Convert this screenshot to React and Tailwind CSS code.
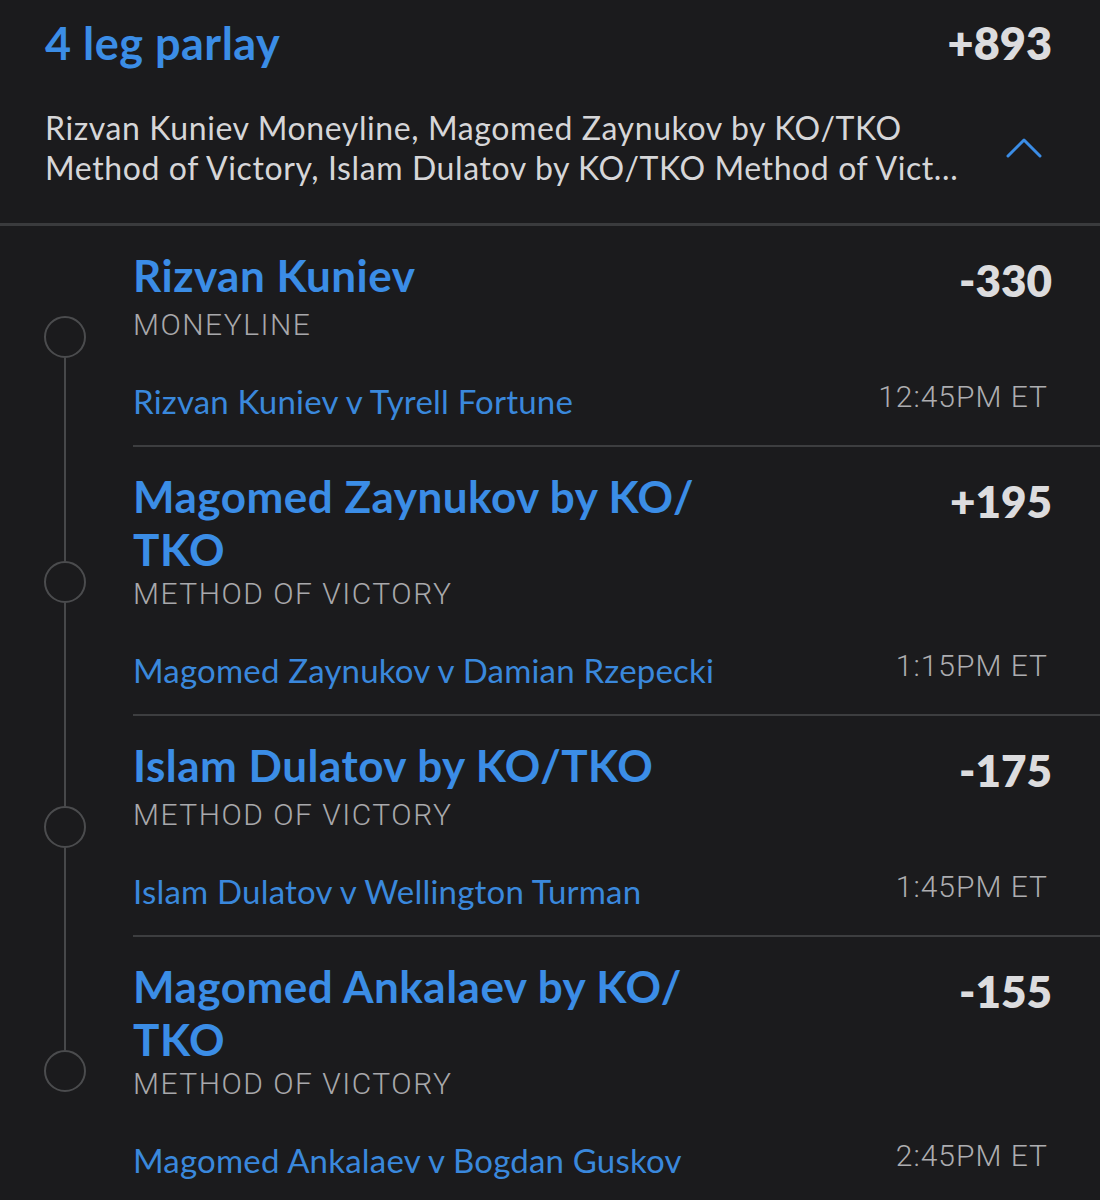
import React from 'react';

const legs = [
  {
    pick: 'Rizvan Kuniev',
    market: 'MONEYLINE',
    odds: '-330',
    event: 'Rizvan Kuniev v Tyrell Fortune',
    time: '12:45PM ET',
  },
  {
    pick: 'Magomed Zaynukov by KO/TKO',
    market: 'METHOD OF VICTORY',
    odds: '+195',
    event: 'Magomed Zaynukov v Damian Rzepecki',
    time: '1:15PM ET',
  },
  {
    pick: 'Islam Dulatov by KO/TKO',
    market: 'METHOD OF VICTORY',
    odds: '-175',
    event: 'Islam Dulatov v Wellington Turman',
    time: '1:45PM ET',
  },
  {
    pick: 'Magomed Ankalaev by KO/TKO',
    market: 'METHOD OF VICTORY',
    odds: '-155',
    event: 'Magomed Ankalaev v Bogdan Guskov',
    time: '2:45PM ET',
  },
];

const marketLabel = (m) => (m === 'MONEYLINE' ? 'Moneyline' : 'Method of Victory');

// first line of the collapsed summary is the first two legs, the rest gets cut with an ellipsis
const summaryHead = legs
  .slice(0, 2)
  .map((leg) => `${leg.pick}${leg.market === 'MONEYLINE' ? ` ${marketLabel(leg.market)}` : ''}`)
  .join(', ');
const summaryTail = [
  `${marketLabel(legs[1].market)}`,
  ...legs.slice(2).map((leg) => `${leg.pick} ${marketLabel(leg.market)}`),
].join(', ');

// allow the pick to wrap right after the slash, like "KO/" | "TKO"
const PickText = ({ text }) => {
  const parts = text.split('/');
  return parts.map((p, i) => (
    <React.Fragment key={i}>
      {p}
      {i < parts.length - 1 && (
        <>
          /<wbr />
        </>
      )}
    </React.Fragment>
  ));
};

const ChevronUp = () => (
  <svg width="36" height="22" viewBox="0 0 36 22" fill="none" className="mr-[10px]">
    <polyline points="2,19 18,3 34,19" stroke="#3b8de6" strokeWidth="3" strokeLinecap="round" strokeLinejoin="round" />
  </svg>
);

// left rail: half line above, ring, half line below
const Rail = ({ first, last }) => (
  <div className="w-[133px] shrink-0 flex flex-col items-center pr-[3px]">
    <div className={`flex-1 w-[2px] ${first ? 'bg-transparent' : 'bg-[#47484a]'}`} />
    <div className="w-[42px] h-[42px] rounded-full border-2 border-[#4b4c4e] shrink-0" />
    <div className={`flex-1 w-[2px] ${last ? 'bg-transparent' : 'bg-[#47484a]'}`} />
  </div>
);

const Leg = ({ leg, first, last }) => (
  <div className="flex">
    <Rail first={first} last={last} />
    <div className={`flex-1 pr-[48px] pt-[23px] pb-[22px] ${last ? '' : 'border-b-2 border-[#3d3e40]'}`}>
      <div className="flex justify-between">
        <div className="max-w-[600px] text-[44px] leading-[53px] tracking-[0.5px] font-bold text-[#3b8de6]">
          <PickText text={leg.pick} />
        </div>
        <div className="mt-[5px] text-[44px] leading-[53px] font-extrabold text-[#dcdcde]">{leg.odds}</div>
      </div>
      <div className="font-['Roboto',sans-serif] font-light text-[30px] leading-[36px] tracking-[1.5px] text-[#a8a8ab]">
        {leg.market}
      </div>
      <div className="mt-[36px] flex justify-between items-center">
        <div className="text-[33px] leading-[40px] tracking-[0.2px] text-[#3a88dc]">{leg.event}</div>
        <div className="mb-[8px] mr-[4px] font-['Roboto',sans-serif] font-light text-[30px] leading-[36px] tracking-[1px] text-[#adadb0]">
          {leg.time}
        </div>
      </div>
    </div>
  </div>
);

export default function App() {
  return (
    <div className="min-h-screen bg-[#1b1b1d] font-['Lato','Open_Sans',sans-serif] overflow-hidden">
      <div className="pl-[45px] pr-[48px] pt-[17px] pb-[35px]">
        <div className="flex justify-between">
          <div className="text-[45px] leading-[53px] tracking-[0.5px] font-bold text-[#3b8de6]">4 leg parlay</div>
          <div className="text-[45px] leading-[53px] font-extrabold text-[#dcdcde]">+893</div>
        </div>
        <div className="mt-[38px] flex items-center justify-between">
          <div className="w-[930px] text-[32px] leading-[40px] tracking-[0.6px] text-[#d6d6d8]">
            <p className="truncate">{summaryHead}</p>
            <p className="truncate">{summaryTail}</p>
          </div>
          <ChevronUp />
        </div>
      </div>
      <div className="h-[3px] bg-[#3a3b3d]" />
      <div>
        {legs.map((leg, i) => (
          <Leg key={leg.event} leg={leg} first={i === 0} last={i === legs.length - 1} />
        ))}
      </div>
    </div>
  );
}
